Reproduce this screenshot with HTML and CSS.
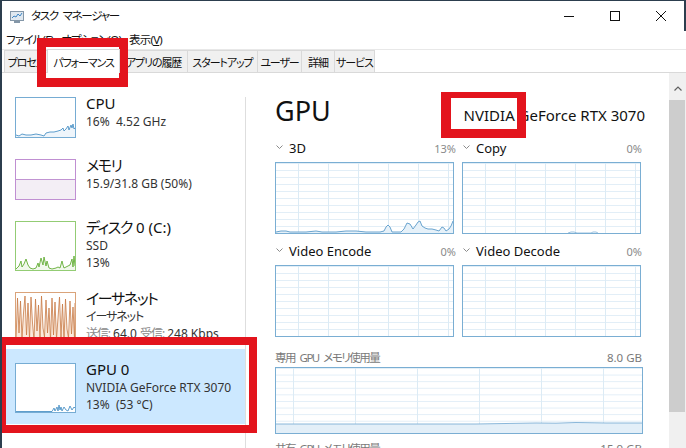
FILE: index.html
```html
<!DOCTYPE html>
<html lang="ja">
<head>
<meta charset="utf-8">
<title>タスク マネージャー</title>
<link rel="stylesheet" href="styles.css">
</head>
<body>
<div class="window">
  <div class="titlebar">
    <svg class="app-icon" width="14" height="12" viewBox="0 0 14 12">
      <rect x="0.5" y="0.5" width="13" height="9" fill="#dfe8f0" stroke="#8497a8"/>
      <polyline points="2,7 4,5 6,6 8,3 10,5 12,2" fill="none" stroke="#3f86c4" stroke-width="1"/>
      <rect x="4" y="10" width="6" height="2" fill="#8497a8"/>
    </svg>
    <span class="title">タスク マネージャー</span>
    <div class="controls">
      <span class="ctl"><svg width="10" height="10" viewBox="0 0 10 10"><line x1="0" y1="5.5" x2="10" y2="5.5" stroke="#111" stroke-width="1"/></svg></span>
      <span class="ctl"><svg width="10" height="10" viewBox="0 0 10 10"><rect x="0.5" y="0.5" width="9" height="9" fill="none" stroke="#111" stroke-width="1"/></svg></span>
      <span class="ctl"><svg width="10" height="10" viewBox="0 0 10 10"><path d="M0 0 L10 10 M10 0 L0 10" stroke="#111" stroke-width="1"/></svg></span>
    </div>
  </div>
  <div class="menubar">
    <span class="menu">ファイル(F)</span>
    <span class="menu">オプション(O)</span>
    <span class="menu">表示(<u>V</u>)</span>
  </div>
  <div class="tabs">
    <span class="tab t1">プロセス</span>
    <span class="tab t2 active">パフォーマンス</span>
    <span class="tab t3">アプリの履歴</span>
    <span class="tab t4">スタートアップ</span>
    <span class="tab t5">ユーザー</span>
    <span class="tab t6">詳細</span>
    <span class="tab t7">サービス</span>
  </div>
  <div class="content">
    <div class="sidebar">
      <div class="list">
        <div class="item">
          <div class="thumb cpu">
            <svg viewBox="0 0 59 39" preserveAspectRatio="none">
              <polygon fill="#eef5fb" points="0,37 3,38 6,36 10,37 15,37 20,36 25,37 28,38 30,35 34,34 38,34 42,33 45,32 47,30 48,33 50,31 52,28 53,32 55,27 56,30 57,26 58,31 59,30 59,39 0,39"/>
              <polyline fill="none" stroke="#4d93c6" stroke-width="0.9" points="0,37 3,38 6,36 10,37 15,37 20,36 25,37 28,38 30,35 34,34 38,34 42,33 45,32 47,30 48,33 50,31 52,28 53,32 55,27 56,30 57,26 58,31 59,30"/>
            </svg>
          </div>
          <div class="info">
            <div class="name">CPU</div>
            <div class="sub">16%&nbsp;&nbsp;4.52 GHz</div>
          </div>
        </div>
        <div class="item">
          <div class="thumb mem">
            <svg viewBox="0 0 59 39" preserveAspectRatio="none">
              <rect x="0" y="19.5" width="59" height="19.5" fill="#f3eef5"/>
              <line x1="0" y1="19.5" x2="59" y2="19.5" stroke="#c194d2" stroke-width="1"/>
            </svg>
          </div>
          <div class="info">
            <div class="name"><span class="ja">メモリ</span></div>
            <div class="sub">15.9/31.8 GB (50%)</div>
          </div>
        </div>
        <div class="item">
          <div class="thumb disk">
            <svg viewBox="0 0 59 48" preserveAspectRatio="none">
              <polygon fill="#f1f8ec" points="0,47 3,44 5,39 6,45 8,42 10,37 12,43 14,46 17,47 20,46 22,41 23,45 25,36 27,43 28,35 30,44 31,39 33,46 36,47 40,46 42,45 44,46 46,39 47,43 48,46 52,44 54,43 56,37 57,45 58,34 59,44 59,48 0,48"/>
              <polyline fill="none" stroke="#62ad34" stroke-width="0.9" points="0,47 3,44 5,39 6,45 8,42 10,37 12,43 14,46 17,47 20,46 22,41 23,45 25,36 27,43 28,35 30,44 31,39 33,46 36,47 40,46 42,45 44,46 46,39 47,43 48,46 52,44 54,43 56,37 57,45 58,34 59,44"/>
            </svg>
          </div>
          <div class="info">
            <div class="name"><span class="ja">ディスク</span> 0 (C:)</div>
            <div class="sub">SSD</div>
            <div class="sub">13%</div>
          </div>
        </div>
        <div class="item">
          <div class="thumb eth">
            <svg viewBox="0 0 59 48" preserveAspectRatio="none">
              <polygon fill="#fae9dc" points="0,47 1.5,5 3,40 4.5,8 6,45 7.5,20 9,3 10.5,42 12,10 13.5,46 15,4 16.5,30 18,47 19.5,6 21,38 22.5,12 24,46 25.5,3 27,35 28.5,44 30,7 31.5,40 33,15 34.5,47 36,5 37.5,42 39,9 40.5,46 42,25 43.5,4 45,44 46.5,11 48,47 49.5,6 51,36 52.5,45 54,8 55.5,41 57,14 58.5,46 59,10 59,48 0,48"/>
              <polyline fill="none" stroke="#c87a45" stroke-width="0.8" points="0,47 1.5,5 3,40 4.5,8 6,45 7.5,20 9,3 10.5,42 12,10 13.5,46 15,4 16.5,30 18,47 19.5,6 21,38 22.5,12 24,46 25.5,3 27,35 28.5,44 30,7 31.5,40 33,15 34.5,47 36,5 37.5,42 39,9 40.5,46 42,25 43.5,4 45,44 46.5,11 48,47 49.5,6 51,36 52.5,45 54,8 55.5,41 57,14 58.5,46 59,10"/>
            </svg>
          </div>
          <div class="info">
            <div class="name"><span class="ja">イーサネット</span></div>
            <div class="sub"><span class="ja">イーサネット</span></div>
            <div class="sub"><span class="muted ja">送信:</span> 64.0 <span class="muted ja">受信:</span> 248 Kbps</div>
          </div>
        </div>
        <div class="item selected">
          <div class="thumb gpu">
            <svg viewBox="0 0 59 48" preserveAspectRatio="none">
              <polyline fill="none" stroke="#4d93c6" stroke-width="0.9" points="0,47.5 36,47.5 38,44 39,47 41,43 42,47 43,41 44,46 45,43 46,47 48,43 50,46 52,47 54,42 56,46 58,43 59,44"/>
            </svg>
          </div>
          <div class="info">
            <div class="name">GPU 0</div>
            <div class="sub">NVIDIA GeForce RTX 3070</div>
            <div class="sub">13%&nbsp;&nbsp;(53 °C)</div>
          </div>
        </div>
      </div>
      <div class="divider"></div>
    </div>

    <div class="main">
      <div class="gpu-head">
        <span class="gpu-title">GPU</span>
        <span class="gpu-name">NVIDIA GeForce RTX 3070</span>
      </div>
      <div class="charts">
        <div class="cell">
          <div class="clabel">
            <span class="cname"><svg class="chev" width="7" height="4" viewBox="0 0 7 4"><path d="M0.5 0.5 L3.5 3.5 L6.5 0.5" fill="none" stroke="#8a8a8a"/></svg>3D</span>
            <span class="cval">13%</span>
          </div>
          <div class="chart">
            <svg viewBox="0 0 177 70" preserveAspectRatio="none">
              <polygon fill="#e6f1f9" points="0,69 5,68 10,68 14,69 30,69 40,68 46,69 60,69 70,68 80,68 90,69 104,69 108,68 110,64 112,62 114,64 116,69 125,69 128,66 131,60 134,61 137,66 140,62 142,59 144,58 146,63 149,65 152,66 156,66 160,67 163,68 166,64 168,65 170,68 173,66 175,63 177,58 177,70 0,70"/>
              <polyline fill="none" stroke="#5b9bc9" stroke-width="0.9" points="0,69 5,68 10,68 14,69 30,69 40,68 46,69 60,69 70,68 80,68 90,69 104,69 108,68 110,64 112,62 114,64 116,69 125,69 128,66 131,60 134,61 137,66 140,62 142,59 144,58 146,63 149,65 152,66 156,66 160,67 163,68 166,64 168,65 170,68 173,66 175,63 177,58"/>
            </svg>
          </div>
        </div>
        <div class="cell">
          <div class="clabel">
            <span class="cname"><svg class="chev" width="7" height="4" viewBox="0 0 7 4"><path d="M0.5 0.5 L3.5 3.5 L6.5 0.5" fill="none" stroke="#8a8a8a"/></svg>Copy</span>
            <span class="cval">0%</span>
          </div>
          <div class="chart">
            <svg viewBox="0 0 177 70" preserveAspectRatio="none">
              <polyline fill="none" stroke="#8fbadb" stroke-width="0.9" points="105,70 108,69 111,69 114,70 128,70 130,69 133,69 135,70"/>
            </svg>
          </div>
        </div>
        <div class="cell">
          <div class="clabel">
            <span class="cname"><svg class="chev" width="7" height="4" viewBox="0 0 7 4"><path d="M0.5 0.5 L3.5 3.5 L6.5 0.5" fill="none" stroke="#8a8a8a"/></svg>Video Encode</span>
            <span class="cval">0%</span>
          </div>
          <div class="chart"></div>
        </div>
        <div class="cell">
          <div class="clabel">
            <span class="cname"><svg class="chev" width="7" height="4" viewBox="0 0 7 4"><path d="M0.5 0.5 L3.5 3.5 L6.5 0.5" fill="none" stroke="#8a8a8a"/></svg>Video Decode</span>
            <span class="cval">0%</span>
          </div>
          <div class="chart"></div>
        </div>
      </div>
      <div class="mlabel">
        <span class="ja">専用 GPU メモリ使用量</span>
        <span>8.0 GB</span>
      </div>
      <div class="memchart">
        <svg viewBox="0 0 366 65" preserveAspectRatio="none">
          <polygon fill="#e3eff8" points="0,56 60,56 120,56 200,56 230,55.5 260,55 280,55.2 300,54.5 330,55 366,55 366,65 0,65"/>
          <polyline fill="none" stroke="#7eb0d6" stroke-width="0.9" points="0,56 60,56 120,56 200,56 230,55.5 260,55 280,55.2 300,54.5 330,55 366,55"/>
        </svg>
      </div>
      <div class="mlabel second">
        <span class="ja">共有 GPU メモリ使用量</span>
        <span>15.9 GB</span>
      </div>
    </div>

    <div class="scrollbar">
      <div class="sb-btn"><svg width="8" height="5" viewBox="0 0 8 5"><path d="M0.5 4.5 L4 1 L7.5 4.5" fill="none" stroke="#606060" stroke-width="1.2"/></svg></div>
      <div class="sb-thumb"></div>
    </div>
  </div>

  <div class="mark mark-tab"></div>
  <div class="mark mark-gpu"></div>
  <div class="mark mark-name"></div>
</div>
</body>
</html>
```

FILE: styles.css
```css
* { box-sizing: border-box; }
html, body { margin: 0; padding: 0; }
body {
  width: 686px;
  height: 448px;
  overflow: hidden;
  background: #fff;
  font-family: "Segoe UI", "Noto Sans", "Noto Sans CJK JP", sans-serif;
  font-feature-settings: "palt" 1;
  color: #000;
}
.ja { letter-spacing: -0.09em; }
.window {
  position: relative;
  width: 686px;
  height: 448px;
  border-left: 2px solid #2c3e4e;
  border-top: 1px solid #2c3e4e;
  overflow: hidden;
}
.titlebar {
  height: 30px;
  display: flex;
  align-items: center;
  border-right: 2px solid #2c3e4e;
  padding-left: 8px;
}
.app-icon { margin-right: 7px; margin-top: 1px; }
.title {
  font-size: 11.5px;
  line-height: 16px;
  letter-spacing: -0.11em;
  word-spacing: 3px;
  color: #111;
  white-space: nowrap;
}
.controls { margin-left: auto; display: flex; height: 30px; }
.ctl {
  width: 46px;
  height: 30px;
  display: flex;
  align-items: center;
  justify-content: center;
}
.menubar {
  height: 18px;
  display: flex;
  align-items: center;
}
.menu {
  font-size: 11.5px;
  line-height: 16px;
  letter-spacing: -0.07em;
  padding: 0 4px;
  color: #111;
  white-space: nowrap;
}
.menu u { text-decoration: underline; }
.tabs {
  height: 24px;
  display: flex;
  align-items: flex-end;
  border-top: 1px solid #e8e8e8;
  border-bottom: 1px solid #d9d9d9;
  padding-left: 2px;
}
.tab {
  height: 22px;
  display: flex;
  align-items: center;
  justify-content: center;
  font-size: 11px;
  letter-spacing: -0.1em;
  white-space: nowrap;
  color: #111;
  background: #f0f0f0;
  border: 1px solid #d9d9d9;
  border-bottom: none;
  margin-left: -1px;
  flex: none;
}
.tab.t1 { width: 44px; margin-left: 0; }
.tab.t2 { width: 73px; }
.tab.t3 { width: 69px; }
.tab.t4 { width: 71px; }
.tab.t5 { width: 45px; }
.tab.t6 { width: 34px; }
.tab.t7 { width: 41px; }
.tab.active {
  background: #fff;
  height: 24px;
  margin-bottom: -1px;
  position: relative;
  z-index: 1;
}
.content {
  height: 375px;
  display: flex;
}
.sidebar {
  width: 244px;
  display: flex;
  flex: none;
}
.list {
  width: 243px;
  padding-top: 14px;
}
.divider {
  width: 1px;
  margin-top: 24px;
  background: #dedede;
}
.item {
  display: flex;
  padding: 10px 0 11px 13px;
}
.item.selected {
  background: #cce8ff;
  padding-top: 14px;
  margin-top: -4px;
}
.thumb {
  width: 61px;
  height: 41px;
  border: 1px solid #76acd3;
  flex: none;
  background: #fff;
}
.thumb svg { display: block; width: 100%; height: 100%; }
.thumb.mem { border-color: #c08fd2; }
.thumb.disk { height: 50px; border-color: #93cc74; }
.thumb.eth { height: 50px; border-color: #daa37a; }
.thumb.gpu { height: 50px; }
.info {
  margin-left: 10px;
  margin-top: -4px;
}
.name {
  font-size: 15px;
  line-height: 20px;
  color: #111;
  white-space: nowrap;
}
.sub {
  font-size: 12px;
  line-height: 17px;
  color: #333;
  white-space: nowrap;
}
.muted { color: #8a8a8a; }

.main {
  width: 423px;
  flex: none;
  padding: 20px 27px 0 29px;
}
.gpu-head {
  display: flex;
  align-items: baseline;
  justify-content: space-between;
}
.gpu-title {
  font-size: 27px;
  line-height: 36px;
  color: #111;
}
.gpu-name {
  font-size: 15px;
  line-height: 20px;
  color: #111;
  margin-right: -3px;
}
.charts {
  margin-top: 10px;
  display: grid;
  grid-template-columns: 181px 180px;
  column-gap: 6px;
  row-gap: 8px;
}
.clabel {
  height: 18px;
  display: flex;
  justify-content: space-between;
  align-items: center;
  margin-bottom: 5px;
}
.cname {
  font-size: 13px;
  line-height: 18px;
  color: #111;
  display: flex;
  align-items: center;
}
.chev { margin: -3px 6px 0 1px; }
.cval {
  font-size: 11px;
  color: #8a8a8a;
}
.chart {
  width: 179px;
  height: 72px;
  border: 1px solid #7aaed3;
  background-color: #fff;
  background-image:
    linear-gradient(to right, #dcebf5 1px, transparent 1px),
    linear-gradient(to bottom, #e2eef7 1px, transparent 1px);
  background-size: 30px 100%, 100% 7px;
  background-position: 22px 0, 0 0;
}
.chart svg, .memchart svg { display: block; width: 100%; height: 100%; }
.mlabel {
  margin-top: 12px;
  height: 16px;
  display: flex;
  justify-content: space-between;
  align-items: center;
  font-size: 11.5px;
  color: #7a7a7a;
  margin-bottom: 2px;
  white-space: nowrap;
}
.mlabel .ja { letter-spacing: -0.13em; word-spacing: 3px; }
.mlabel.second { margin-top: 6px; }
.memchart {
  width: 368px;
  height: 67px;
  border: 1px solid #7aaed3;
  background-color: #fff;
  background-image:
    linear-gradient(to right, #dcebf5 1px, transparent 1px),
    linear-gradient(to bottom, #e2eef7 1px, transparent 1px);
  background-size: 62px 100%, 100% 6.6px;
  background-position: 17px 0, 0 0;
}
.scrollbar {
  width: 17px;
  flex: none;
  background: #f0f0f0;
  display: flex;
  flex-direction: column;
}
.sb-btn {
  height: 27px;
  display: flex;
  align-items: flex-end;
  justify-content: center;
  padding-bottom: 9px;
}
.sb-thumb {
  height: 312px;
  margin: 0 1px 0 0;
  background: #cdcdcd;
}
.mark {
  position: absolute;
  border: 9px solid #e3141d;
  pointer-events: none;
}
.mark-tab {
  left: 35px;
  top: 37px;
  width: 91px;
  height: 49px;
}
.mark-gpu {
  left: -4px;
  top: 336px;
  width: 259px;
  height: 96px;
  border-width: 8px;
}
.mark-name {
  left: 439px;
  top: 91px;
  width: 85px;
  height: 46px;
  border-width: 6px 9px 9px 10px;
}
```
